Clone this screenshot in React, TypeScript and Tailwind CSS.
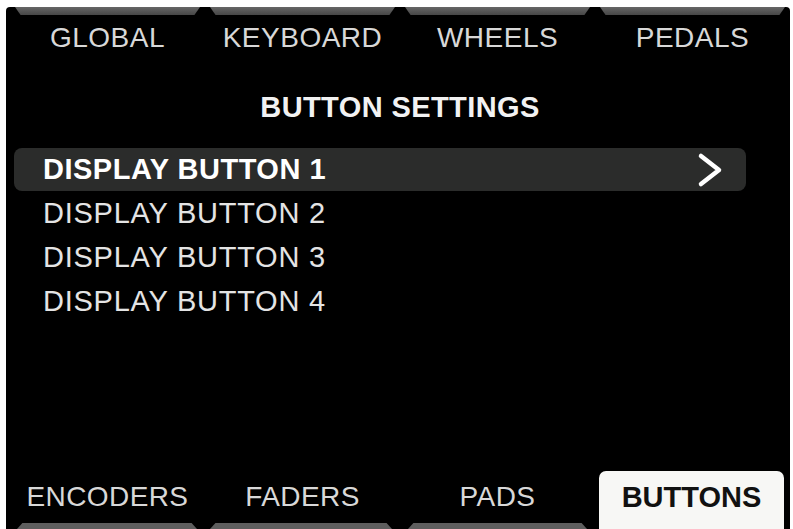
import React from "react";

const topTabs = ["GLOBAL", "KEYBOARD", "WHEELS", "PEDALS"];
const rows = ["DISPLAY BUTTON 1", "DISPLAY BUTTON 2", "DISPLAY BUTTON 3", "DISPLAY BUTTON 4"];

export default function App() {
  return (
    <div
      className="w-[793px] h-[529px] bg-white pt-[7px] pl-[6px] pr-[3px] flex flex-col overflow-hidden"
      style={{ fontFamily: '"Liberation Sans", Arial, sans-serif' }}
    >
      <div className="flex-1 bg-black rounded-t-[4px] flex flex-col pl-[4px]">
        {/* top tabs */}
        <div className="grid grid-cols-4">
          {topTabs.map((t) => (
            <div key={t} className="flex flex-col">
              <div className="mx-[5px] h-[8px] bg-gradient-to-b from-[#666666] to-[#474747] [clip-path:polygon(0_0,100%_0,97%_100%,3%_100%)]" />
              <div className="h-[46px] flex items-center justify-center text-[28px] leading-none tracking-[0.5px] text-[#d8d8d8]">
                {t}
              </div>
            </div>
          ))}
        </div>

        {/* heading */}
        <div className="mt-[32px] h-[28px] flex items-center justify-center text-[29px] leading-none font-bold tracking-[0.4px] text-[#f2f2f2]">
          BUTTON SETTINGS
        </div>

        {/* list */}
        <div className="mt-[27px] ml-[4px] w-[732px] flex flex-col">
          {rows.map((r, i) => (
            <div
              key={r}
              className={
                i === 0
                  ? "h-[43px] flex items-center justify-between pl-[29px] pr-[23px] rounded-[8px] bg-[#2b2c2b]"
                  : "h-[44px] flex items-center pl-[29px]"
              }
            >
              <span
                className={
                  i === 0
                    ? "text-[29px] leading-none font-bold tracking-[0.5px] text-white"
                    : "text-[29px] leading-none tracking-[0.75px] text-[#e4e4e4]"
                }
              >
                {r}
              </span>
              {i === 0 && (
                <svg width="26" height="36" viewBox="0 0 26 36" fill="none">
                  <polyline
                    points="4,4 22,18 4,32"
                    stroke="white"
                    strokeWidth="4.5"
                    strokeLinecap="round"
                    strokeLinejoin="round"
                  />
                </svg>
              )}
            </div>
          ))}
        </div>

        <div className="flex-1" />

        {/* bottom tabs */}
        <div className="grid grid-cols-4 h-[58px]">
          <div className="flex flex-col">
            <div className="flex-1 flex items-center justify-center text-[28px] leading-none tracking-[0.4px] text-[#d8d8d8]">
              ENCODERS
            </div>
            <div className="ml-[7px] mr-[8px] h-[6px] bg-[#5e5e5e] [clip-path:polygon(3%_0,97%_0,100%_100%,0_100%)]" />
          </div>
          <div className="flex flex-col">
            <div className="flex-1 flex items-center justify-center text-[28px] leading-none tracking-[0.4px] text-[#d8d8d8]">
              FADERS
            </div>
            <div className="ml-[5px] mr-[8px] h-[6px] bg-[#5e5e5e] [clip-path:polygon(3%_0,97%_0,100%_100%,0_100%)]" />
          </div>
          <div className="flex flex-col">
            <div className="flex-1 flex items-center justify-center text-[28px] leading-none tracking-[0.4px] text-[#d8d8d8]">
              PADS
            </div>
            <div className="ml-[8px] mr-[8px] h-[6px] bg-[#5e5e5e] [clip-path:polygon(3%_0,97%_0,100%_100%,0_100%)]" />
          </div>
          <div className="flex flex-col">
            <div className="flex-1 ml-[4px] mr-[6px] rounded-t-[7px] bg-[#f7f7f5] flex items-start justify-center pt-[12px]">
              <span className="text-[29px] leading-none font-bold text-[#111]">BUTTONS</span>
            </div>
          </div>
        </div>
      </div>
    </div>
  );
}
